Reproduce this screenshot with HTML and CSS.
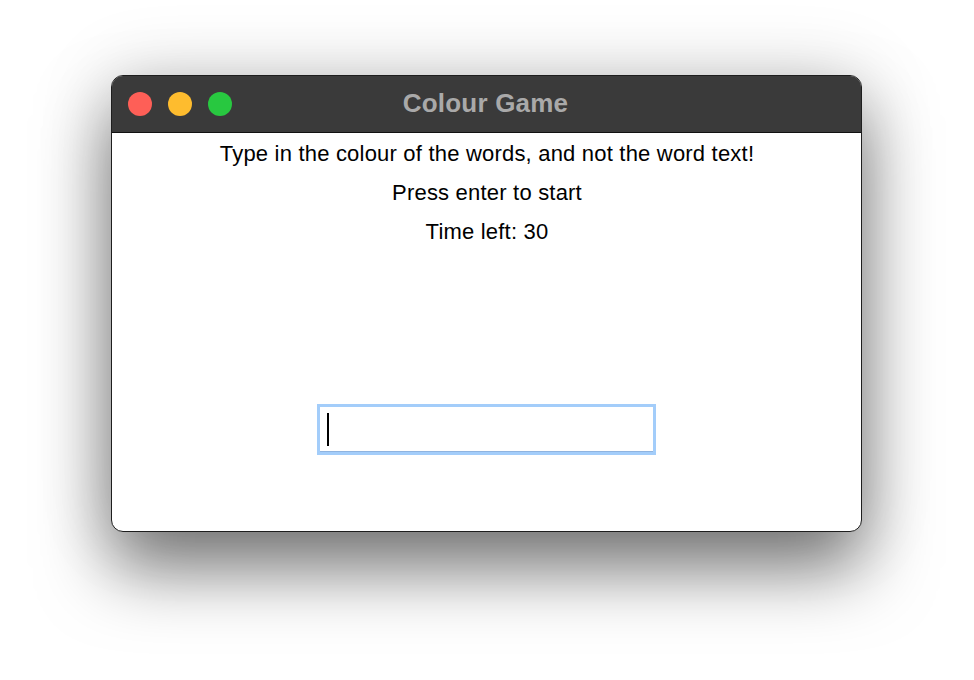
FILE: index.html
```html
<!DOCTYPE html>
<html>
<head>
<meta charset="utf-8">
<link rel="stylesheet" href="styles.css">
</head>
<body>
<div class="stage">
  <div class="window">
    <div class="titlebar">
      <div class="lights">
        <span class="light red"></span>
        <span class="light yellow"></span>
        <span class="light green"></span>
      </div>
      <div class="title">Colour Game</div>
    </div>
    <div class="content">
      <p class="line">Type in the colour of the words, and not the word text!</p>
      <p class="line">Press enter to start</p>
      <p class="line">Time left: 30</p>
      <div class="spacer"></div>
      <div class="entry"><span class="caret"></span></div>
    </div>
  </div>
</div>
</body>
</html>
```

FILE: styles.css
```css
html, body {
  margin: 0;
  padding: 0;
  background: #ffffff;
  width: 974px;
  height: 680px;
  overflow: hidden;
}
.stage {
  padding: 75px 0 0 111px;
}
.window {
  width: 751px;
  height: 457px;
  box-sizing: border-box;
  border: 1px solid #1e1e1e;
  border-radius: 12px;
  overflow: hidden;
  background: #ffffff;
  box-shadow: 0 38px 70px rgba(0,0,0,0.5), 0 0 75px rgba(0,0,0,0.16);
  display: flex;
  flex-direction: column;
  font-family: "Liberation Sans", Arial, sans-serif;
}
.titlebar {
  height: 56px;
  background: #3a3a3a;
  border-bottom: 1px solid #111;
  position: relative;
  display: flex;
  align-items: center;
  justify-content: center;
  flex-shrink: 0;
}
.lights {
  position: absolute;
  left: 16px;
  top: 16px;
  display: flex;
  gap: 16px;
}
.light {
  width: 24px;
  height: 24px;
  border-radius: 50%;
  display: block;
}
.red { background: #fe5f57; }
.yellow { background: #febc2e; }
.green { background: #28c840; }
.title {
  color: #a9a9a9;
  font-weight: bold;
  font-size: 26px;
  letter-spacing: 0.2px;
  margin-left: -2px;
  margin-top: -2px;
}
.content {
  flex: 1;
  display: flex;
  flex-direction: column;
  align-items: center;
  padding-top: 1px;
}
.line {
  margin: 0;
  font-size: 22px;
  letter-spacing: 0.2px;
  line-height: 39px;
  color: #000;
  height: 39px;
  margin-left: 1px;
}
.spacer {
  height: 153px;
}
.entry {
  width: 339px;
  height: 51px;
  box-sizing: border-box;
  border: 3px solid #a3cdfa;
  background: #fff;
  box-shadow: inset 0 -1px 0 #8fb4e0;
  padding: 6px 0 0 7px;
}
.caret {
  display: block;
  width: 2px;
  height: 33px;
  background: #000;
}
```
